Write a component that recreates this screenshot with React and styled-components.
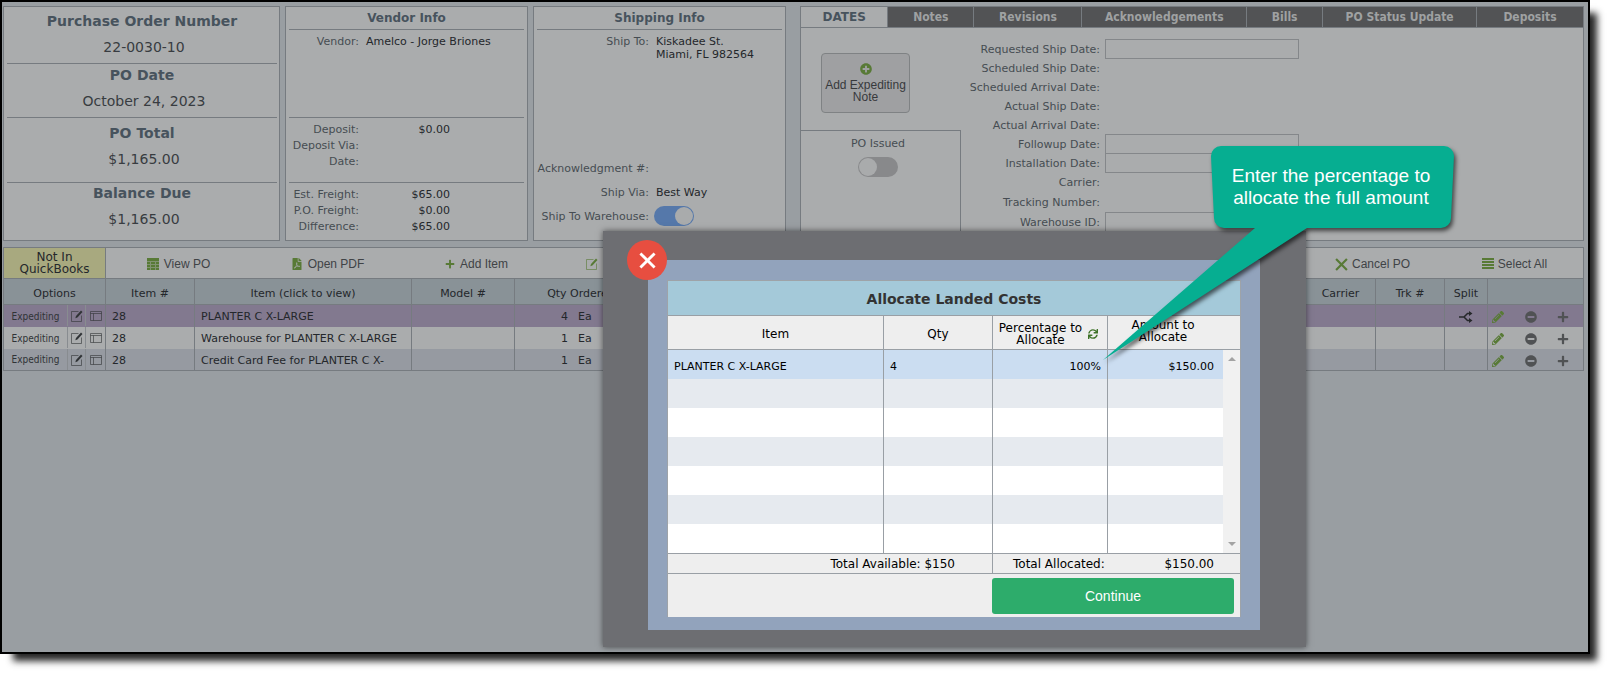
import React from "react";
import styled, { createGlobalStyle, css } from "styled-components";
import { FaFilePdf, FaPlus, FaPlusCircle, FaMinusCircle, FaPencilAlt, FaSync } from "react-icons/fa";

const sans = `"DejaVu Sans", Verdana, sans-serif`;
const condensed = `"DejaVu Sans Condensed", Tahoma, sans-serif`;
const arial = `"Liberation Sans", Arial, sans-serif`;

const c = {
  page: "#999ea2",
  card: "#aaacad",
  line: "#767b80",
  head: "#899297",
  purple: "#82798f",
  alt: "#969aa1",
  label: "#464c52",
  title: "#47535d",
  text: "#24272b",
  tab: "#525355",
  green: "#587a36",
  icon: "#505254",
};

const Global = createGlobalStyle`
  *, *::before, *::after { box-sizing: border-box; }
  body { margin: 0; background: #fff; font-family: ${sans}; font-size: 11px; color: ${c.text}; }
  button { margin: 0; padding: 0; border: 0; background: none; color: inherit; font: inherit; cursor: pointer; }
  input { margin: 0; font: inherit; color: inherit; }
  svg { display: block; flex: none; }
`;

const Frame = styled.main`
  position: relative;
  min-height: calc(100vh - 24px);
  margin: 0 24px 24px 0;
  padding: 4px 4px 0 1px;
  border: 2px solid #000;
  background: ${c.page};
  box-shadow: 10px 10px 7px -3px rgba(0, 0, 0, 0.85);
`;

const Header = styled.header`
  display: grid;
  grid-template-columns: 277px 243px 253px 1fr;
  column-gap: 5px;
  height: 235px;
`;

const Card = styled.section`
  display: flex;
  flex-direction: column;
  border: 1px solid ${c.line};
  background: ${c.card};
  min-width: 0;
`;

const TabCard = styled(Card)`
  margin-left: 9px;
`;

/* Purchase order summary */

const Summary = styled.div`
  flex: ${(p) => (p.$height ? `0 0 ${p.$height}px` : "1")};
  margin: 0 2px 0 3px;
  padding-top: ${(p) => p.$top}px;
  text-align: center;
  line-height: 20px;
  font-size: 14px;
  & + & {
    border-top: 1px solid ${c.line};
  }
`;

const SummaryTitle = styled.h2`
  margin: 0 0 6px;
  font-size: 14px;
  line-height: 20px;
  color: ${c.title};
`;

const SummaryValue = styled.div`
  padding-left: 4px;
  color: #383c41;
`;

/* Vendor and shipping cards */

const CardTitle = styled.h2`
  margin: 0 3px;
  border-bottom: 1px solid ${c.line};
  height: 23px;
  font-size: 12px;
  line-height: 22px;
  text-align: center;
  color: ${c.title};
`;

const FieldBlock = styled.div`
  flex: ${(p) => (p.$height ? `0 0 ${p.$height}px` : "1")};
  padding-top: ${(p) => p.$top || 3}px;
  margin: 0 3px 0 3px;
  & + & {
    border-top: 1px solid ${c.line};
  }
`;

const Field = styled.div`
  display: grid;
  grid-template-columns: ${(p) => p.$label || 70}px 1fr;
  column-gap: ${(p) => p.$gap || 7}px;
  align-items: center;
  min-height: ${(p) => p.$height || 16}px;
`;

const FieldLabel = styled.span`
  text-align: right;
  white-space: nowrap;
  color: ${c.label};
`;

const FieldValue = styled.span`
  line-height: 13px;
  white-space: nowrap;
`;

const Money = styled(FieldValue)`
  width: 84px;
  text-align: right;
`;

const ShipRows = styled.div`
  margin-top: auto;
  padding-bottom: 12px;
`;

const Switch = styled.input.attrs({ type: "checkbox", role: "switch" })`
  appearance: none;
  display: flex;
  width: 40px;
  height: 20px;
  padding: 1px;
  border-radius: 10px;
  background: #88898b;
  cursor: pointer;
  &::before {
    content: "";
    width: 18px;
    height: 18px;
    border-radius: 50%;
    background: #a9abac;
  }
  &:checked {
    justify-content: flex-end;
    background: #5578aa;
  }
`;

/* Tabbed card */

const Tabs = styled.nav`
  display: flex;
  flex: 0 0 21px;
`;

const Tab = styled.button`
  flex: ${(p) => p.$share} 1 0;
  border-bottom: 1px solid ${c.line};
  border-left: 1px solid ${c.line};
  background: ${c.tab};
  font: bold 12px ${condensed};
  color: #9fa1a2;
  white-space: nowrap;
  &:first-child {
    border-left: 0;
  }
  ${(p) =>
    p.$active &&
    css`
      border-bottom-color: ${c.line};
      background: ${c.card};
      color: ${c.title};
      font-family: ${sans};
    `}
`;

const DatesPanel = styled.div`
  display: flex;
  flex: 1;
`;

const Issue = styled.div`
  display: flex;
  flex-direction: column;
  width: 160px;
  padding-top: 25px;
`;

const NoteButton = styled.button`
  display: flex;
  flex-direction: column;
  align-items: center;
  width: 89px;
  height: 60px;
  margin: 0 0 17px 20px;
  padding-top: 9px;
  border: 1px solid #7f8284;
  border-radius: 4px;
  background: #9fa0a2;
  color: #37393c;
  font: 12px/12px ${arial};
  svg {
    margin-bottom: 4px;
    color: ${c.green};
  }
`;

const IssuedBox = styled.label`
  display: flex;
  flex: 1;
  flex-direction: column;
  align-items: center;
  gap: 6px;
  padding: 6px 5px 0 0;
  border: solid ${c.line};
  border-width: 1px 1px 0 0;
  line-height: 14px;
  color: ${c.label};
`;

const DateForm = styled.div`
  flex: 1;
  padding-top: 11px;
`;

const DateRow = styled.div`
  display: grid;
  grid-template-columns: 139px 194px;
  column-gap: 5px;
  align-items: start;
  height: ${(p) => (p.$tall ? 20 : 19)}px;
  line-height: 22px;
`;

const DateLabel = styled.label`
  text-align: right;
  white-space: nowrap;
  color: ${c.label};
`;

const DateInput = styled.input`
  width: 100%;
  height: 20px;
  border: 1px solid #84878a;
  background: transparent;
`;

/* Toolbar */

const Toolbar = styled.div`
  display: flex;
  height: 31px;
  margin-top: 6px;
  border: 1px solid ${c.line};
  border-bottom: 0;
  background: ${c.card};
`;

const QuickBooks = styled.div`
  flex: 0 0 102px;
  padding-top: 3px;
  border-right: 1px solid ${c.line};
  background: #a8a97f;
  font-size: 12px;
  line-height: 12px;
  text-align: center;
`;

const ToolButton = styled.button`
  display: flex;
  flex: 0 0 149px;
  align-items: center;
  justify-content: center;
  gap: 5px;
  padding: 2px 4px 0 0;
  font: 12px ${arial};
  color: #404346;
  svg {
    color: ${c.green};
  }
`;

const IconToolButton = styled(ToolButton)`
  justify-content: flex-start;
  padding-left: 33px;
`;

const EndToolButton = styled(ToolButton)`
  flex-basis: 142px;
  gap: 4px;
  padding: 2px 0 0 5px;
`;

const Spacer = styled.div`
  flex: 1;
`;

/* Order lines */

const Lines = styled.table`
  width: 100%;
  table-layout: fixed;
  border-collapse: collapse;
  border: 1px solid ${c.line};
`;

const Col = styled.col`
  width: ${(p) => (p.$width ? `${p.$width}px` : "auto")};
`;

const Th = styled.th`
  height: 26px;
  padding: 3px 0 0;
  border: 1px solid ${c.line};
  background: ${c.head};
  font-weight: normal;
  white-space: nowrap;
`;

const PlainTh = styled(Th)`
  border-left: 0;
  border-right: 0;
`;

const tones = { purple: c.purple, light: c.card, alt: c.alt };

const Line = styled.tr`
  height: 22px;
  background: ${(p) => tones[p.$tone]};
  & + & td {
    border-top: 1px dashed ${c.line};
  }
`;

const Td = styled.td`
  height: 22px;
  padding: 3px 0 0 ${(p) => p.$pad || 0}px;
  border-left: ${(p) => (p.$open ? 0 : 1)}px solid ${c.line};
  line-height: 16px;
  white-space: nowrap;
  overflow: hidden;
`;

const OptionsTd = styled(Td)`
  padding: 0;
`;

const Options = styled.div`
  display: grid;
  grid-template-columns: 63px 18px 1fr;
  height: 21px;
`;

const OptionButton = styled.button`
  display: flex;
  align-items: center;
  justify-content: center;
  padding-top: 1px;
  font: 10px ${condensed};
  color: #303336;
  & + & {
    border-left: 1px solid #888c90;
  }
`;

const Quantity = styled.div`
  display: grid;
  grid-template-columns: 53px auto;
  column-gap: 10px;
  justify-content: start;
  span:first-child {
    text-align: right;
  }
`;

const Actions = styled.div`
  display: flex;
  align-items: center;
  justify-content: space-between;
  padding: 0 14px 0 4px;
`;

const IconButton = styled.button`
  color: ${(p) => (p.$green ? c.green : c.icon)};
`;

const SplitButton = styled(IconButton)`
  display: block;
  margin: 0 auto;
  color: #26282b;
`;

/* Allocation dialog */

const Backdrop = styled.div`
  position: absolute;
  top: 229px;
  left: 601px;
  width: 703px;
  padding: 29px 46px 17px 45px;
  background: #6d6e72;
  box-shadow: 0 0 6px rgba(0, 0, 0, 0.55);
`;

const Dialog = styled.section`
  padding: 20px 19px 13px 19px;
  background: #92a3bc;
`;

const CloseButton = styled.button`
  position: absolute;
  top: 9px;
  left: 24px;
  display: grid;
  place-items: center;
  width: 40px;
  height: 40px;
  border-radius: 50%;
  background: #e74e40;
  color: #fff;
`;

const Sheet = styled.div`
  background: #eee;
  border: 1px solid #9ea3a8;
  border-bottom: 0;
  color: #000;
`;

const SheetTitle = styled.h2`
  margin: 0;
  height: 34px;
  background: #a4c9d9;
  color: #333;
  font-size: 14px;
  line-height: 36px;
  text-align: center;
`;

const Allocation = styled.table`
  width: 100%;
  table-layout: fixed;
  border-collapse: separate;
  border-spacing: 0;
`;

const AHead = styled.th`
  height: 35px;
  padding: ${(p) => (p.$raised ? "0 5px 4px 0" : "2px 0 0")};
  border: solid #999fa5;
  border-width: 1px 0 1px ${(p) => (p.$first ? 0 : 1)}px;
  background: #eee;
  font-size: 12px;
  font-weight: normal;
  line-height: 12px;
`;

const HeadWithIcon = styled.div`
  display: flex;
  align-items: center;
  justify-content: center;
  gap: 6px;
  padding-right: 3px;
  svg {
    color: #3f7328;
  }
`;

const ARow = styled.tr`
  background: #fff;
  &:nth-child(even) {
    background: #e6eaef;
  }
  &:first-child {
    background: #cbddf1;
  }
`;

const ACell = styled.td`
  height: 29px;
  padding: 3px ${(p) => p.$right || 0}px 0 6px;
  border-left: ${(p) => (p.$first ? 0 : 1)}px solid #999fa5;
  text-align: ${(p) => (p.$right ? "right" : "left")};
`;

const PercentInput = styled.input`
  display: block;
  width: 100%;
  padding: 0;
  border: 0;
  background: transparent;
  text-align: right;
  outline: none;
`;

const ScrollCell = styled.td`
  padding: 0;
  background: #f1f1f1;
  vertical-align: top;
`;

const ScrollTrack = styled.div`
  display: flex;
  flex-direction: column;
  align-items: center;
  justify-content: space-between;
  height: 203px;
  padding: 7px 0;
`;

const TotalCell = styled.td`
  height: 21px;
  padding: 0 ${(p) => p.$right || 0}px 0 0;
  border: solid #999fa5;
  border-width: 1px 0 1px ${(p) => (p.$first ? 0 : 1)}px;
  text-align: right;
  font-size: 12px;
`;

const TotalSplit = styled.div`
  display: flex;
  justify-content: space-between;
  padding-left: 20px;
`;

const SheetFooter = styled.footer`
  display: flex;
  justify-content: flex-end;
  padding: 4px 6px 3px 0;
`;

const ContinueButton = styled.button`
  width: 242px;
  height: 36px;
  border-radius: 3px;
  background: #2dac6b;
  color: #fff;
  font: 14px ${arial};
`;

/* Callout */

const Callout = styled.aside`
  position: absolute;
  top: 144px;
  left: 1101px;
  width: 351px;
  height: 214px;
  pointer-events: none;
  svg {
    overflow: visible;
    filter: drop-shadow(2px 3px 2px rgba(0, 0, 0, 0.6));
  }
`;

const CalloutText = styled.p`
  position: absolute;
  top: 0;
  right: 0;
  display: grid;
  place-items: center;
  width: 243px;
  height: 81px;
  margin: 0;
  padding-right: 3px;
  color: #fff;
  font: 19px/22px ${arial};
  text-align: center;
`;

const GridIcon = () => (
  <svg width="12" height="12" viewBox="0 0 12 12" aria-hidden="true">
    <path fill="currentColor" d="M0 0h12v3H0zM0 4h3v2H0zM4 4h4v2H4zM9 4h3v2H9zM0 7h3v2H0zM4 7h4v2H4zM9 7h3v2H9zM0 10h3v2H0zM4 10h4v2H4zM9 10h3v2H9z" />
    <path fill="currentColor" opacity="0.5" d="M0 3h12v9H0z" />
  </svg>
);

const EditIcon = () => (
  <svg width="12" height="12" viewBox="0 0 12 12" aria-hidden="true">
    <path d="M7.500 1.500h-7v10h10V5.500" fill="none" stroke="currentColor" opacity="0.6" />
    <path d="M4.300 8.200L5 5.900 10 .6l1.500 1.400-5.100 5.400z" fill="currentColor" />
  </svg>
);

const LayoutIcon = () => (
  <svg width="12" height="12" viewBox="0 0 12 12" aria-hidden="true">
    <path d="M.5 1.500h11v9H.5zM.5 3.500h11M3.500 3.500v7" fill="none" stroke="currentColor" opacity="0.6" />
  </svg>
);

const CrossIcon = ({ size, weight }) => (
  <svg width={size} height={size} viewBox="0 0 12 12" aria-hidden="true">
    <path d="M1 1l10 10M11 1L1 11" stroke="currentColor" strokeWidth={weight} />
  </svg>
);

const BarsIcon = () => (
  <svg width="12" height="12" viewBox="0 0 12 12" aria-hidden="true">
    <path d="M0 0h12v2H0zM0 3h12v2H0zM0 6h12v2H0zM0 9h12v2H0z" fill="currentColor" />
  </svg>
);

const SplitIcon = () => (
  <svg width="14" height="12" viewBox="0 0 14 12" aria-hidden="true">
    <path d="M0 6h5M11 2.500H8.500L5 6l3.500 3.500H11" fill="none" stroke="currentColor" strokeWidth="1.500" />
    <path d="M10 0l3.500 2.500L10 5zM10 7l3.500 2.500L10 12z" fill="currentColor" />
  </svg>
);

const ArrowIcon = ({ down }) => (
  <svg width="8" height="4" viewBox="0 0 8 4" aria-hidden="true">
    <path d={down ? "M0 0h8L4 4z" : "M0 4h8L4 0z"} fill="#a3a3a3" />
  </svg>
);

const summary = [
  { title: "Purchase Order Number", value: "22-0030-10", height: 56, top: 4 },
  { title: "PO Date", value: "October 24, 2023", height: 54, top: 1 },
  { title: "PO Total", value: "$1,165.00", height: 65, top: 5 },
  { title: "Balance Due", value: "$1,165.00", top: 0 },
];

const tabs = [
  ["DATES", 87], ["Notes", 86], ["Revisions", 108], ["Acknowledgements", 165],
  ["Bills", 76], ["PO Status Update", 154], ["Deposits", 107],
];

const dates = [
  { label: "Requested Ship Date:", input: true },
  { label: "Scheduled Ship Date:" },
  { label: "Scheduled Arrival Date:" },
  { label: "Actual Ship Date:" },
  { label: "Actual Arrival Date:" },
  { label: "Followup Date:", input: true },
  { label: "Installation Date:", input: true },
  { label: "Carrier:", tall: true },
  { label: "Tracking Number:", tall: true },
  { label: "Warehouse ID:", input: true, tall: true },
];

const lines = [
  { item: "PLANTER C X-LARGE", qty: 4, tone: "purple", split: true },
  { item: "Warehouse for PLANTER C X-LARGE", qty: 1, tone: "light" },
  { item: "Credit Card Fee for PLANTER C X-", qty: 1, tone: "alt" },
];

function SummaryCard() {
  return (
    <Card>
      {summary.map((s) => (
        <Summary key={s.title} $height={s.height} $top={s.top}>
          <SummaryTitle>{s.title}</SummaryTitle>
          <SummaryValue>{s.value}</SummaryValue>
        </Summary>
      ))}
    </Card>
  );
}

function MoneyField({ label, value }) {
  return (
    <Field>
      <FieldLabel>{label}</FieldLabel>
      <Money>{value}</Money>
    </Field>
  );
}

function VendorCard() {
  return (
    <Card>
      <CardTitle>Vendor Info</CardTitle>
      <FieldBlock $height={87}>
        <Field>
          <FieldLabel>Vendor:</FieldLabel>
          <FieldValue>Amelco - Jorge Briones</FieldValue>
        </Field>
      </FieldBlock>
      <FieldBlock $height={65}>
        <MoneyField label="Deposit:" value="$0.00" />
        <MoneyField label="Deposit Via:" />
        <MoneyField label="Date:" />
      </FieldBlock>
      <FieldBlock>
        <MoneyField label="Est. Freight:" value="$65.00" />
        <MoneyField label="P.O. Freight:" value="$0.00" />
        <MoneyField label="Difference:" value="$65.00" />
      </FieldBlock>
    </Card>
  );
}

function ShippingCard() {
  return (
    <Card>
      <CardTitle>Shipping Info</CardTitle>
      <FieldBlock $top={5}>
        <Field $label={112}>
          <FieldLabel>Ship To:</FieldLabel>
          <FieldValue>Kiskadee St.</FieldValue>
          <span />
          <FieldValue>Miami, FL 982564</FieldValue>
        </Field>
      </FieldBlock>
      <ShipRows>
        <Field $label={115} $height={24}>
          <FieldLabel>Acknowledgment #:</FieldLabel>
        </Field>
        <Field $label={115} $height={24}>
          <FieldLabel>Ship Via:</FieldLabel>
          <FieldValue>Best Way</FieldValue>
        </Field>
        <Field $label={115} $gap={5} $height={24}>
          <FieldLabel as="label" htmlFor="to-warehouse">Ship To Warehouse:</FieldLabel>
          <Switch id="to-warehouse" defaultChecked />
        </Field>
      </ShipRows>
    </Card>
  );
}

function DatesCard() {
  return (
    <TabCard>
      <Tabs>
        {tabs.map(([name, share], i) => (
          <Tab key={name} $share={share} $active={i === 0}>{name}</Tab>
        ))}
      </Tabs>
      <DatesPanel>
        <Issue>
          <NoteButton>
            <FaPlusCircle size={12} />
            Add Expediting
            <br />
            Note
          </NoteButton>
          <IssuedBox>
            PO Issued
            <Switch />
          </IssuedBox>
        </Issue>
        <DateForm>
          {dates.map((d, i) => (
            <DateRow key={d.label} $tall={d.tall}>
              <DateLabel htmlFor={d.input ? `date-${i}` : undefined}>{d.label}</DateLabel>
              {d.input && <DateInput id={`date-${i}`} />}
            </DateRow>
          ))}
        </DateForm>
      </DatesPanel>
    </TabCard>
  );
}

function OrderLines() {
  return (
    <Lines>
      <colgroup>
        <Col $width={102} /><Col $width={89} /><Col $width={217} /><Col $width={103} /><Col $width={133} />
        <Col /><Col $width={70} /><Col $width={69} /><Col $width={43} /><Col $width={96} />
      </colgroup>
      <thead>
        <tr>
          <Th>Options</Th>
          <Th>Item #</Th>
          <Th>Item (click to view)</Th>
          <Th>Model #</Th>
          <Th>Qty Ordered</Th>
          <PlainTh as="td" />
          <Th>Carrier</Th>
          <Th>Trk #</Th>
          <Th>Split</Th>
          <Th as="td" />
        </tr>
      </thead>
      <tbody>
        {lines.map((l) => (
          <Line key={l.item} $tone={l.tone}>
            <OptionsTd>
              <Options>
                <OptionButton>Expediting</OptionButton>
                <OptionButton aria-label="Edit line"><EditIcon /></OptionButton>
                <OptionButton aria-label="Line details"><LayoutIcon /></OptionButton>
              </Options>
            </OptionsTd>
            <Td $pad={6}>28</Td>
            <Td $pad={6}>{l.item}</Td>
            <Td />
            <Td>
              <Quantity><span>{l.qty}</span><span>Ea</span></Quantity>
            </Td>
            <Td $open />
            <Td />
            <Td />
            <Td>{l.split && <SplitButton aria-label="Split line"><SplitIcon /></SplitButton>}</Td>
            <Td>
              <Actions>
                <IconButton $green aria-label="Edit"><FaPencilAlt size={12} /></IconButton>
                <IconButton aria-label="Remove"><FaMinusCircle size={12} /></IconButton>
                <IconButton aria-label="Add"><FaPlus size={12} /></IconButton>
              </Actions>
            </Td>
          </Line>
        ))}
      </tbody>
    </Lines>
  );
}

function AllocationDialog() {
  return (
    <Backdrop>
      <Dialog role="dialog" aria-labelledby="allocate-title">
        <Sheet>
          <SheetTitle id="allocate-title">Allocate Landed Costs</SheetTitle>
          <Allocation>
            <colgroup>
              <Col /><Col $width={109} /><Col $width={115} /><Col $width={116} /><Col $width={17} />
            </colgroup>
            <thead>
              <tr>
                <AHead $first>Item</AHead>
                <AHead>Qty</AHead>
                <AHead>
                  <HeadWithIcon>
                    <span>Percentage to<br />Allocate</span>
                    <FaSync size={10} />
                  </HeadWithIcon>
                </AHead>
                <AHead $raised>Amount to<br />Allocate</AHead>
                <AHead as="td" $first />
              </tr>
            </thead>
            <tbody>
              <ARow>
                <ACell $first>PLANTER C X-LARGE</ACell>
                <ACell>4</ACell>
                <ACell $right={6}><PercentInput defaultValue="100%" aria-label="Percentage to allocate" /></ACell>
                <ACell $right={9}>$150.00</ACell>
                <ScrollCell rowSpan={7}>
                  <ScrollTrack><ArrowIcon /><ArrowIcon down /></ScrollTrack>
                </ScrollCell>
              </ARow>
              {[1, 2, 3, 4, 5, 6].map((n) => (
                <ARow key={n}><ACell $first /><ACell /><ACell /><ACell /></ARow>
              ))}
            </tbody>
            <tfoot>
              <tr>
                <TotalCell $first colSpan={2} $right={37}>Total Available: $150</TotalCell>
                <TotalCell colSpan={3} $right={26}>
                  <TotalSplit><span>Total Allocated:</span><span>$150.00</span></TotalSplit>
                </TotalCell>
              </tr>
            </tfoot>
          </Allocation>
          <SheetFooter><ContinueButton>Continue</ContinueButton></SheetFooter>
        </Sheet>
      </Dialog>
      <CloseButton aria-label="Close"><CrossIcon size={17} weight={2} /></CloseButton>
    </Backdrop>
  );
}

export default function App() {
  return (
    <>
      <Global />
      <Frame>
        <Header>
          <SummaryCard />
          <VendorCard />
          <ShippingCard />
          <DatesCard />
        </Header>
        <Toolbar>
          <QuickBooks>Not In<br />QuickBooks</QuickBooks>
          <ToolButton><GridIcon />View PO</ToolButton>
          <ToolButton><FaFilePdf size={12} />Open PDF</ToolButton>
          <ToolButton><FaPlus size={10} />Add Item</ToolButton>
          <IconToolButton aria-label="Edit items"><EditIcon /></IconToolButton>
          <Spacer />
          <EndToolButton><CrossIcon size={13} weight={2} />Cancel PO</EndToolButton>
          <EndToolButton><BarsIcon />Select All</EndToolButton>
        </Toolbar>
        <OrderLines />
        <AllocationDialog />
        <Callout>
          <svg width="351" height="214" viewBox="0 0 351 214" aria-hidden="true">
            <path
              d="M118 0h223a10 10 0 0 1 10 10l-3 62a10 10 0 0 1-10 10H204L0 214 152 82h-31a10 10 0 0 1-10-10l-3-62a10 10 0 0 1 10-10z"
              fill="#06ae91"
            />
          </svg>
          <CalloutText>Enter the percentage to<br />allocate the full amount</CalloutText>
        </Callout>
      </Frame>
    </>
  );
}
